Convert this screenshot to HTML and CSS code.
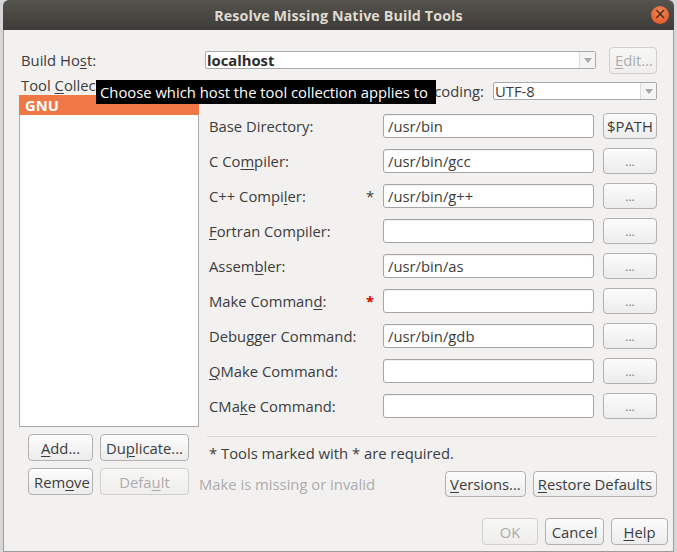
FILE: index.html
```html
<!DOCTYPE html>
<html>
<head>
<meta charset="utf-8">
<link rel="stylesheet" href="styles.css">
</head>
<body>
<div class="dialog">
  <div class="titlebar">
    <span class="title">Resolve Missing Native Build Tools</span>
    <span class="close">×</span>
  </div>
  <div class="content">
    <div class="host-row">
      <span class="host-label">Build Ho<u>s</u>t:</span>
      <div class="combo host-combo"><span class="combo-text bold">localhost</span><span class="combo-arrow"></span></div>
      <button class="btn edit-btn" disabled><u>E</u>dit...</button>
    </div>
    <div class="main">
      <div class="left-col">
        <div class="tc-label">Tool <u>C</u>ollection:</div>
        <div class="list">
          <div class="list-item selected">GNU</div>
        </div>
        <div class="btn-grid">
          <button class="btn w64"><u>A</u>dd...</button>
          <button class="btn w88">Du<u>p</u>licate...</button>
          <button class="btn w64">Rem<u>o</u>ve</button>
          <button class="btn w88" disabled>Defa<u>u</u>lt</button>
        </div>
      </div>
      <div class="right-col">
        <div class="enc-row">
          <span class="enc-label">Encoding:</span>
          <div class="combo enc-combo"><span class="combo-text">UTF-8</span><span class="combo-arrow"></span></div>
        </div>
        <div class="form">
          <div class="row"><span class="lbl">Base Directory:</span><span class="star"></span><div class="field">/usr/bin</div><button class="btn side-btn">$PATH</button></div>
          <div class="row"><span class="lbl">C Co<u>m</u>piler:</span><span class="star"></span><div class="field">/usr/bin/gcc</div><button class="btn side-btn dots">...</button></div>
          <div class="row"><span class="lbl">C++ Compi<u>l</u>er:</span><span class="star">*</span><div class="field">/usr/bin/g++</div><button class="btn side-btn dots">...</button></div>
          <div class="row"><span class="lbl"><u>F</u>ortran Compiler:</span><span class="star"></span><div class="field"></div><button class="btn side-btn dots">...</button></div>
          <div class="row"><span class="lbl">Assem<u>b</u>ler:</span><span class="star"></span><div class="field">/usr/bin/as</div><button class="btn side-btn dots">...</button></div>
          <div class="row"><span class="lbl">Make Comman<u>d</u>:</span><span class="star red">*</span><div class="field"></div><button class="btn side-btn dots">...</button></div>
          <div class="row"><span class="lbl">Debu<u>g</u>ger Command:</span><span class="star"></span><div class="field">/usr/bin/gdb</div><button class="btn side-btn dots">...</button></div>
          <div class="row"><span class="lbl"><u>Q</u>Make Command:</span><span class="star"></span><div class="field"></div><button class="btn side-btn dots">...</button></div>
          <div class="row"><span class="lbl">CMa<u>k</u>e Command:</span><span class="star"></span><div class="field"></div><button class="btn side-btn dots">...</button></div>
        </div>
        <div class="sep"></div>
        <div class="note">* Tools marked with * are required.</div>
        <div class="status-row">
          <span class="status">Make is missing or invalid</span>
          <div class="status-btns">
            <button class="btn"><u>V</u>ersions...</button>
            <button class="btn"><u>R</u>estore Defaults</button>
          </div>
        </div>
      </div>
    </div>
    <div class="dlg-buttons">
      <button class="btn w56" disabled>OK</button>
      <button class="btn w59">Cancel</button>
      <button class="btn w57"><u>H</u>elp</button>
    </div>
  </div>
  <div class="tooltip">Choose which host the tool collection applies to</div>
</div>
</body>
</html>
```

FILE: styles.css
```css
html, body {
  margin: 0;
  padding: 0;
}
body {
  width: 677px;
  height: 552px;
  overflow: hidden;
  background: #d6d6d6;
  font-family: "Open Sans", "Noto Sans", sans-serif;
  font-size: 14.8px;
  color: #3c3c3c;
}
u {
  text-decoration-thickness: 1px;
  text-underline-offset: 2px;
}
.dialog {
  position: relative;
  margin-left: 3px;
  width: 671px;
  height: 552px;
  background: #f2f1f0;
  box-sizing: border-box;
  border-left: 1px solid #9d9d9d;
  border-right: 1px solid #9d9d9d;
  border-bottom: 1px solid #9d9d9d;
  border-radius: 6px 6px 0 0;
}
.titlebar {
  height: 30px;
  margin: 0 -1px;
  background: linear-gradient(#55534d, #3d3c38);
  border-radius: 6px 6px 0 0;
  display: flex;
  align-items: center;
  justify-content: center;
  position: relative;
}
.title {
  color: #dfdbd2;
  font-weight: bold;
  font-size: 14.3px;
  letter-spacing: 0.1px;
}
.close {
  position: absolute;
  right: 5px;
  top: 6px;
  width: 18px;
  height: 18px;
  border-radius: 50%;
  background: radial-gradient(circle at 50% 35%, #f5885a, #df4f1c);
  color: #3a2a20;
  font-size: 15px;
  line-height: 17px;
  text-align: center;
  font-family: "DejaVu Sans", sans-serif;
}
.content {
  padding: 17px 16px 0 15px;
}
.host-row {
  display: flex;
  align-items: center;
  height: 26px;
}
.host-label {
  width: 184px;
  padding-left: 2px;
}
.combo {
  display: flex;
  align-items: center;
  height: 18px;
  background: #fff;
  border: 1px solid #a9a9a9;
  border-radius: 2px;
  box-sizing: border-box;
}
.combo-text {
  flex: 1;
  padding-left: 1px;
  line-height: 16px;
}
.bold {
  font-weight: bold;
  color: #2c2c2c;
}
.combo-arrow {
  width: 15px;
  height: 16px;
  background: #f4f4f4;
  border-left: 1px solid #dcdcdc;
  position: relative;
}
.combo-arrow::after {
  content: "";
  position: absolute;
  left: 4px;
  top: 6px;
  border-left: 4px solid transparent;
  border-right: 4px solid transparent;
  border-top: 5px solid #a8a8a8;
}
.host-combo {
  width: 391px;
}
.edit-btn {
  margin-left: 13px;
  width: 48px;
  height: 26px;
}
.main {
  display: flex;
}
.left-col {
  width: 180px;
  flex-shrink: 0;
}
.tc-label {
  height: 22px;
  line-height: 24px;
  padding-left: 2px;
}
.list {
  height: 332px;
  background: #fff;
  border: 1px solid #ababab;
  box-sizing: border-box;
}
.list-item {
  height: 20px;
  line-height: 20px;
  padding-left: 6px;
  margin: -1px -1px 0;
}
.list-item.selected {
  background: #f07746;
  color: #fff;
  font-weight: bold;
}
.btn-grid {
  display: grid;
  grid-template-columns: 65px 89px;
  column-gap: 7px;
  row-gap: 7px;
  margin-top: 7px;
  padding-left: 9px;
}
.btn {
  font-family: inherit;
  font-size: 14.8px;
  color: #3c3c3c;
  background: linear-gradient(#fcfcfc, #ececec);
  border: 1px solid #b1b1b1;
  border-radius: 4px;
  height: 27px;
  padding: 0 5px;
  box-sizing: border-box;
  white-space: nowrap;
}
.btn:disabled {
  color: #acacac;
  border-color: #d0d0d0;
  background: linear-gradient(#f7f7f6, #efeeed);
}
.right-col {
  flex: 1;
  min-width: 0;
  display: flex;
  flex-direction: column;
}
.enc-row {
  display: flex;
  justify-content: flex-end;
  align-items: center;
  height: 18px;
  margin-top: 9px;
  gap: 9px;
}
.enc-label {
  line-height: 18px;
}
.enc-combo {
  width: 164px;
}
.form {
  margin-top: 13px;
  display: flex;
  flex-direction: column;
  gap: 9px;
}
.row {
  display: flex;
  align-items: center;
  height: 26px;
}
.lbl {
  padding-left: 10px;
  width: 155px;
  box-sizing: border-box;
  white-space: nowrap;
}
.star {
  width: 29px;
  text-align: left;
  padding-left: 12px;
  box-sizing: border-box;
}
.star.red {
  color: #e00000;
  font-weight: bold;
}
.field {
  width: 211px;
  height: 24px;
  box-sizing: border-box;
  background: #fff;
  border: 1px solid #a5a5a5;
  border-radius: 3px;
  padding-left: 4px;
  line-height: 22px;
  box-shadow: inset 0 1px 1px rgba(0,0,0,0.06);
}
.side-btn {
  margin-left: 9px;
  width: 54px;
  height: 26px;
  padding: 0;
}
.dots {
  color: #7a7a7a;
  font-size: 12px;
}
.sep {
  margin: 17px 0 0 8px;
  height: 1px;
  background: #dcdbd9;
}
.note {
  margin-top: 6px;
  padding-left: 10px;
  height: 20px;
  line-height: 20px;
}
.status-row {
  display: flex;
  align-items: center;
  justify-content: space-between;
  margin-top: 8px;
}
.status {
  color: #acacac;
}
.status-btns {
  display: flex;
  gap: 7px;
}
.status-btns .btn {
  height: 26px;
  padding: 0 4px;
}
.dlg-buttons {
  display: flex;
  justify-content: flex-end;
  gap: 7px;
  margin-top: 21px;
  margin-right: -11px;
}
.w64 { width: 65px; }
.w88 { width: 89px; }
.w56 { width: 56px; }
.w59 { width: 59px; }
.w57 { width: 57px; }
.tooltip {
  position: absolute;
  left: 92px;
  top: 80px;
  width: 340px;
  height: 24px;
  background: #000;
  color: #fff;
  line-height: 24px;
  padding-left: 4px;
  box-sizing: border-box;
  white-space: nowrap;
}
```
